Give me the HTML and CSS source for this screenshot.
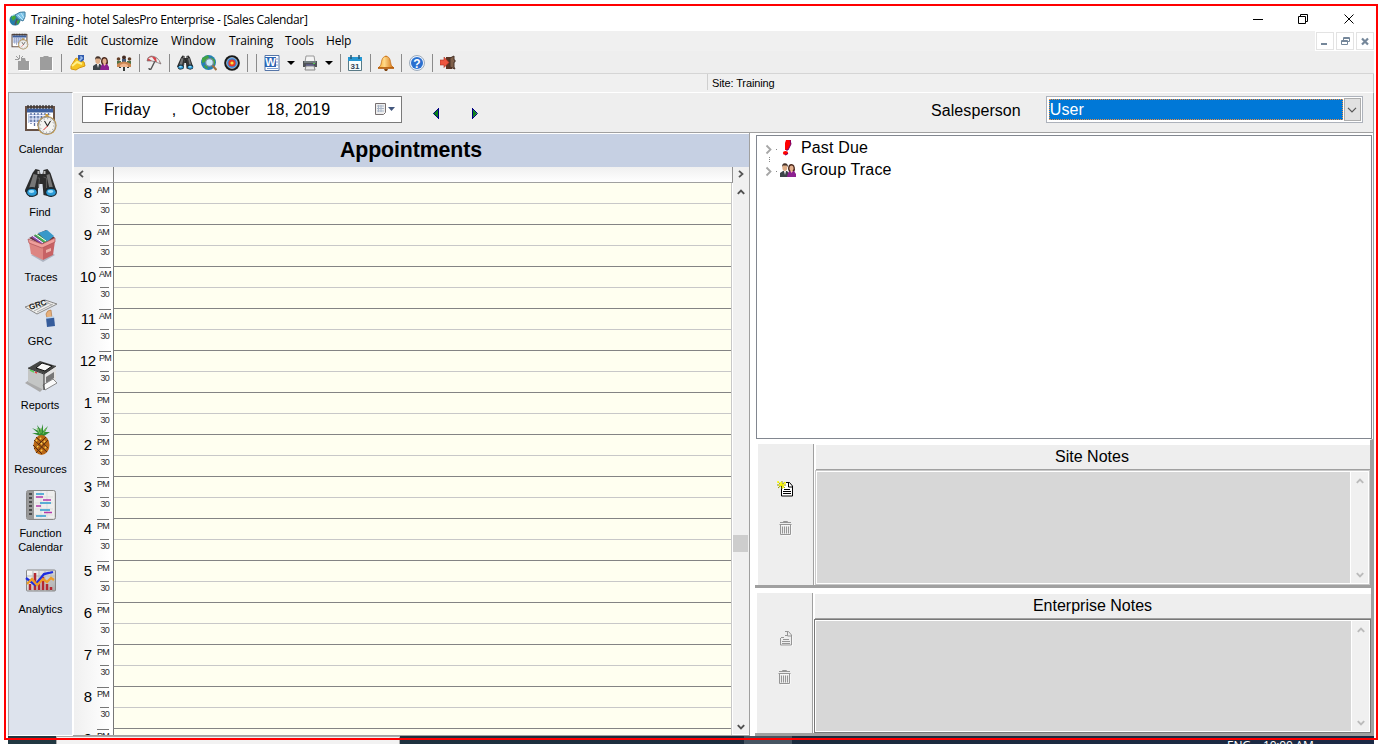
FILE: index.html
```html
<!DOCTYPE html>
<html lang="en">
<head>
<meta charset="utf-8">
<title>Training - hotel SalesPro Enterprise</title>
<link rel="stylesheet" href="styles.css">
</head>
<body>
<svg width="0" height="0" class="defs">
  <defs>
    <linearGradient id="metal" x1="0" y1="0" x2="1" y2="1"><stop offset="0" stop-color="#fff"/><stop offset="1" stop-color="#a8a8a8"/></linearGradient>
    <linearGradient id="gold" x1="0" y1="0" x2="1" y2="0"><stop offset="0" stop-color="#f7a928"/><stop offset=".4" stop-color="#ffd98a"/><stop offset="1" stop-color="#d06a08"/></linearGradient>
    <symbol id="people" viewBox="0 0 16 16">
      <path d="M0 15v-4l3-2h4l2 2v4z" fill="#3c4449"/><path d="M4 9l1 4 1-4z" fill="#fff"/>
      <path d="M8 7Q8 2 11.500 2T15 8L14 10H9z" fill="#4a281c"/>
      <path d="M7 15l1-4 2-2h4l2 3v3z" fill="#8c2190"/><path d="M10.500 9l1 2 1.500-2z" fill="#f2c5a0"/>
      <ellipse cx="4.800" cy="5.500" rx="2.500" ry="3.400" fill="#dfae88"/><path d="M2 5Q2 1 5 1.200T8 5L6.500 3.500H3z" fill="#43322b"/>
      <ellipse cx="11.500" cy="6.200" rx="2" ry="2.800" fill="#e5b18e"/>
    </symbol>
    <symbol id="binoc" viewBox="0 0 32 32">
      <path d="M7 5l3-4 4 1 1 4 2 0 1-4 4-1 3 4 6 18-5 6-8-2-1-11h-4l-1 11-8 2-5-6z" fill="#2c2c2c"/>
      <path d="M8 6l4 1-3 14-6 1zM24 6l-3 1 3 14 4 1z" fill="#777"/><path d="M12 10l2 0-1 10M18 9l3 1 0 10" stroke="#555" fill="none"/>
      <path d="M12 3h2v3h-2zM18 3h2v3h-2z" fill="#bbb"/>
      <ellipse cx="6.500" cy="24" rx="6" ry="5" fill="#1c2b34"/><ellipse cx="25.500" cy="24" rx="6" ry="5" fill="#1c2b34"/>
      <ellipse cx="6.500" cy="24.300" rx="4.700" ry="3.400" fill="#2c9cd8"/><ellipse cx="25.500" cy="24.300" rx="4.700" ry="3.400" fill="#2c9cd8"/>
      <ellipse cx="6" cy="23.500" rx="2.800" ry="1.400" fill="#a5e0fa"/><ellipse cx="25" cy="23.500" rx="2.800" ry="1.400" fill="#a5e0fa"/>
    </symbol>
    <symbol id="calclock" viewBox="0 0 32 32">
      <path d="M0 2h30v24l-3 1H0z" fill="#675247"/><path d="M2 4h26v21H2z" fill="#fff"/><path d="M2 4.500h26v4H2z" fill="#3c5e9e"/>
      <path d="M3 10h23l-9 9H3z" fill="#b9c9e6"/><path d="M6 9v11M9.500 9v13M13 9v13M16.500 9v8M20 9v4M23.500 9v3" stroke="#5b6da0" stroke-width="1.300"/>
      <path d="M4 11.500h21M4 15h11M4 18.500h9" stroke="#eef" />
      <path d="M3 1v4M6 1v4M9 1v4M12 1v4M15 1v4M18 1v4M21 1v4M24 1v4M27 1v4" stroke="#333" stroke-width="1.300"/>
      <path d="M20 10l3 0 1 3h-3z" fill="#c79b40"/><circle cx="22" cy="21.500" r="9.600" fill="#c49439"/><circle cx="22" cy="21.500" r="8.400" fill="#f3f3f0" stroke="#999"/>
      <circle cx="22" cy="21.500" r="6.800" fill="none" stroke="#888" stroke-dasharray="1 2.560"/><path d="M19.500 17l3 5 3-5" fill="none" stroke="#222" stroke-width="1.100"/><path d="M22.500 22l-4 4" stroke="#d33"/>
    </symbol>
    <symbol id="bin" viewBox="0 0 13 15">
      <path d="M2 4h10v10H3" fill="none" stroke="#fff"/><path d="M4.500 1.500V.5h4v1M1 1.500h11M.5 3.500h12M1.500 4v9.500h10V4M3.500 5.500v7M5.500 5.500v7M7.500 5.500v7M9.500 5.500v7" fill="none" stroke="#969696"/>
    </symbol>
    <symbol id="up" viewBox="0 0 8 6"><path d="M.8 4.800L4 1.500l3.200 3.300" fill="none" stroke="currentColor" stroke-width="1.900"/></symbol>
  </defs>
</svg>

<div class="window">
  <header class="titlebar">
    <svg class="app-icon" width="18" height="16" viewBox="0 0 18 16"><circle cx="6" cy="9" r="5.500" fill="#267dab"/><path d="M2 6l4-2 1 3-3 3zM7 10l4-1-2 5z" fill="#43aa39"/><path d="M3 5q2-2 4-1" stroke="#bee" fill="none"/><path d="M6 4q5-4 10-3 1 5-2 9-5-1-8-6z" fill="#7cc3e7" stroke="#427c9d"/><path d="M8 8l-2 6" stroke="#555" stroke-width="1.500"/><path d="M9 4l5 5M12 2l3 5" stroke="#d2f0ff" stroke-width=".8"/></svg>
    <span class="title">Training - hotel SalesPro Enterprise - [Sales Calendar]</span>
    <svg class="caption" width="104" height="12" viewBox="0 0 104 12" fill="none" stroke="#000"><path d="M0 6.500h10"/><path d="M45.500 3.500h7v7h-7zM47.500 3.500v-2h7v7h-2M91.500 1.500l9 9M100.500 1.500l-9 9"/></svg>
  </header>

  <nav class="menubar">
    <svg class="doc-icon" width="18" height="17"><use href="#calclock" width="18" height="17"/></svg>
    <span class="m-file">File</span><span class="m-edit">Edit</span><span class="m-cust">Customize</span><span class="m-win">Window</span><span class="m-train">Training</span><span class="m-tools">Tools</span><span class="m-help">Help</span>
    <div class="mdi">
      <i><svg width="16" height="16"><path d="M4 11h6" stroke="#75879a" stroke-width="2"/></svg></i>
      <i><svg width="16" height="16" fill="none" stroke="#75879a"><path d="M4.500 7.500h6v4h-6zM4.500 8.500h6M6.500 7V4.500h6v4H11M6.500 5.500h6"/></svg></i>
      <i><svg width="16" height="16"><path d="M5 5.500l6 6M11 5.500l-6 6" stroke="#75879a" stroke-width="2.200"/></svg></i>
    </div>
  </nav>

  <div class="toolbar">
    <b><svg width="16" height="16"><path d="M6 4h5l1 3h3v9H4V7h2z" fill="#fff"/><path d="M6 3h4l1 3h3v9H3V6h3z" fill="#9d9d9d"/><path d="M1 1l3 3M4.500 0v4M0 4.500h4M8 1L6 3" stroke="#9d9d9d"/></svg></b>
    <b><svg width="16" height="16"><path d="M3 3h12v13H3z" fill="#fff"/><path d="M2 2h3l1-1h4l1 1h3v13H2z" fill="#9d9d9d"/></svg></b>
    <s class="w9"></s>
    <b><svg width="16" height="16"><path d="M1 11l5-8 8 4 1 4-6 2-3 2-5-1z" fill="#f6c522" stroke="#d39512"/><path d="M2 11l5-4 5 2" stroke="#fff08a" stroke-width="2" fill="none"/><path d="M8 0h6v5l-3 2-3-2z" fill="#345dae"/><path d="M10 2h2v2h-2v2" fill="none" stroke="#bddcff"/></svg></b>
    <b><svg width="16" height="16"><use href="#people" width="16" height="16"/></svg></b>
    <b><svg width="16" height="16"><circle cx="2.500" cy="4" r="1.800" fill="#654028"/><circle cx="8" cy="2.500" r="2" fill="#432b22"/><circle cx="13.500" cy="4" r="1.800" fill="#654028"/><path d="M1 6h4v4H1zM11 6h4v4h-4z" fill="#4c7045"/><path d="M6 4h4v5H6z" fill="#435a79"/><path d="M1 9q7-5 14 0v3H1z" fill="#c98551"/><path d="M4 10q4-3 8 0v2H4z" fill="#efb38a"/><path d="M3 12h2v1H3zM7 12h2v4H7zM11 12h2v1h-2z" fill="#393d3b"/></svg></b>
    <s class="w7"></s>
    <b><svg width="16" height="16"><path d="M1 6q0-4 4-5 6 0 10 8l-5-2-4-1z" fill="#d9444b"/><path d="M2 3l4 3 3 0-3-4zM10 3l1 5 3 1-1-4z" fill="#eee"/><path d="M9 6l-4 8q-2 1-2-1" fill="none" stroke="#555" stroke-width="1.400"/><path d="M1 6q0-4 4-5 7 0 10 8l-5-2-4-1z" fill="none" stroke="#777" stroke-width=".7"/></svg></b>
    <s class="w9"></s>
    <b><svg width="17" height="16"><use href="#binoc" width="17" height="16"/></svg></b>
    <b><svg width="16" height="16"><circle cx="7.500" cy="7.500" r="7.500" fill="#2580b5"/><path d="M1 3l6-3 1 3-4 4-3 1zM10 2l4 3v5l-3-2zM3 10l3 1 1 3-3-1z" fill="#41a344"/><circle cx="8.500" cy="7.500" r="3.800" fill="#cceaf7" stroke="#78899a" stroke-width="1.200"/><path d="M11.500 10.500l4 4.500" stroke="#9d7040" stroke-width="2.200"/></svg></b>
    <b><svg width="16" height="16"><circle cx="8" cy="8" r="7.800" fill="#181818"/><circle cx="8" cy="8" r="5.400" fill="#3388de" stroke="#ddd" stroke-width=".7"/><circle cx="8" cy="8" r="3.600" fill="#e33a27"/><circle cx="8" cy="8" r="1.600" fill="#ffe140"/></svg></b>
    <s class="w9"></s><s class="w8"></s>
    <b><svg width="16" height="16"><path d="M1 .5h14v15H1z" fill="#fff" stroke="#5676a8"/><path d="M12 4h2M12 7h2M12 10h2M3 13.500h11" stroke="#7ea1d4"/><path d="M1 2h11v10H1z" fill="#2c65b5"/><text x="6.500" y="11" class="svg-word">W</text></svg></b>
    <em></em>
    <b><svg width="16" height="16"><path d="M4 1h8l1 6H3z" fill="#f5f5f5" stroke="#999"/><path d="M1 6h14v6H1z" fill="#505357"/><path d="M2 7h12" stroke="#9aa" stroke-width="1"/><path d="M4 11h8l1 4H3z" fill="#e8e8e8" stroke="#888"/><path d="M4 10h8" stroke="#66a"/><path d="M11 8.500h2" stroke="#5c5"/></svg></b>
    <em></em>
    <s class="w7"></s>
    <b><svg width="16" height="16"><path d="M1.500 2.500h13v13h-13z" fill="#f7ffff" stroke="#597a86"/><path d="M1 2h14v4H1z" fill="#2596d1"/><path d="M4 0v4M12 0v4" stroke="#245977" stroke-width="1.500"/><text x="8" y="13.500" class="svg-31">31</text></svg></b>
    <s class="w8"></s>
    <b><svg width="16" height="16"><circle cx="8" cy="2" r="1.500" fill="#e58c21"/><path d="M8 1.500c5 0 4 6 5.500 9l2.500 2.500H0l2.500-2.500c1.500-3 .5-9 5.500-9z" fill="url(#gold)" stroke="#c16710" stroke-width=".7"/><path d="M0 13h16" stroke="#b35a08" stroke-width="1.500"/><path d="M6 14h4l-1 2H7z" fill="#7e4612"/></svg></b>
    <s class="w8"></s>
    <b><svg width="16" height="16"><circle cx="8" cy="8" r="7.500" fill="#e9f3ff" stroke="#9caabb"/><circle cx="8" cy="8" r="6" fill="#2b70cf"/><text x="8" y="12.500" class="svg-help">?</text></svg></b>
    <s class="w8"></s>
    <b><svg width="16" height="16"><path d="M6 2h6v12H6z" fill="#5c3423"/><path d="M10 3l4-2v4h1v2h-1v5l1 2-5-2z" fill="#80604b" stroke="#49342a"/><path d="M0 5h4V2l5 5.500-5 5V10H0z" fill="#ee553e" stroke="#a72f21" stroke-width=".6"/></svg></b>
  </div>

  <div class="statusrow"><span>Site: Training</span></div>

  <div class="workspace">
    <aside class="sidebar">
      <div class="side-item"><svg width="32" height="32"><use href="#calclock" width="32" height="32"/></svg><span>Calendar</span></div>
      <div class="side-item find"><svg width="33" height="32"><use href="#binoc" width="33" height="32"/></svg><span>Find</span></div>
      <div class="side-item traces"><svg width="32" height="32" viewBox="0 0 32 32"><path d="M5 25l12 7 12-7-3-2z" fill="#aeb5c2"/><path d="M3 8l17-8 9 8-13 7z" fill="#6a3637"/><path d="M12 3l9-3 7 6-7 6z" fill="#3999c9"/><path d="M8 5l4-1 9 7-3 2z" fill="#41b458"/><path d="M5 7l4-1 9 7-3 1z" fill="#8846b4"/><path d="M7 6l10 7M10 4l10 7" stroke="#fff"/><path d="M3 12l14 4v14L5 24z" fill="#dd8582"/><path d="M17 16l12-5-2 14-10 5z" fill="#c76265"/><path d="M2 9l14 5 13-6v4l-13 6-13-5z" fill="#ef9f9b" stroke="#ad5156" stroke-width=".7"/><path d="M20 20l5-2v3l-5 2z" fill="#ecb0a9"/></svg><span>Traces</span></div>
      <div class="side-item grc"><svg width="32" height="32" viewBox="0 0 32 32"><path d="M0 10L20 3l12 4-20 10z" fill="#f0f0ee" stroke="#888"/><path d="M12 15l16-8M9 14l15-8M19 4l8 4" stroke="#aaa"/><text x="5" y="13" transform="rotate(-18 5 13)" class="svg-grc">GRC</text><path d="M21 17q1-4 5-4l1 8h-5z" fill="#e6b07c" stroke="#b57c4b" stroke-width=".7"/><path d="M21 21l8-1 1 9-8 1z" fill="#365c9b"/><path d="M21 21l8-1" stroke="#bdd6f1" stroke-width="1.500"/></svg><span>GRC</span></div>
      <div class="side-item reports"><svg width="32" height="32" viewBox="0 0 32 32"><path d="M0 23l4-3 14 9-3 3z" fill="#aaa"/><path d="M3 8L15 1l16 5-11 8z" fill="#454745"/><path d="M11 8l6-5 10 3-7 5z" fill="#f7f7f7" stroke="#111"/><path d="M3 8l16 6v16L3 22z" fill="#c4c6c5"/><path d="M19 14L31 6v15l-12 9z" fill="#e2e2e2"/><path d="M21 17l8-5v6l-8 6z" fill="#777"/><path d="M18 25l10-6 4 4-12 7z" fill="#fafafa" stroke="#888"/><path d="M5 10l4 2" stroke="#57d157" stroke-width="1.500"/><path d="M10 12l2 1" stroke="#d44" stroke-width="1.500"/><path d="M3 8l16 6 12-8M19 14v16" fill="none" stroke="#333"/></svg><span>Reports</span></div>
      <div class="side-item resources"><svg width="32" height="32" viewBox="0 0 32 32"><path d="M15 12L7 9l6 0-6-5 7 3-2-6 4 5 2-6v7l5-5-3 6h5l-6 4-3 2z" fill="#318c36"/><path d="M15 10l-3-6M18 10l3-6M16 9V4" stroke="#78c555"/><ellipse cx="16.500" cy="21" rx="8" ry="10" fill="#ba6714"/><path d="M9 16l13 12M11 13l12 11M8 21l9 9M23 16L11 29M21 13L9 25" stroke="#532c12"/><path d="M11 16l1 1M15 14l1 1M19 17l1 1M12 22l1 1M16 19l1 1M16 26l1 1M20 23l1 1" stroke="#ffd052" stroke-width="2"/></svg><span>Resources</span></div>
      <div class="side-item double"><svg width="32" height="32" viewBox="0 0 32 32"><rect x="1.500" y="1.500" width="29" height="29" rx="2" fill="#ddd" stroke="#888"/><path d="M2 2h7v28H2z" fill="#999"/><path d="M4 5h3M4 9h3M4 13h3M4 17h3M4 21h3M4 25h3" stroke="#333" stroke-width="1.300"/><path d="M9 2h20v27H9z" fill="#eee"/><path d="M10 8h18M10 14h18M10 20h18M10 26h18M16 2v27M22 2v27" stroke="#ddd"/><path d="M11 5h8M15 14h11M11 27h10M15 21h10" stroke="#2e9ad0" stroke-width="1.700"/><path d="M11 8h7M18 11h8M11 17h5M19 23.500h8" stroke="#b23aac" stroke-width="1.400"/></svg><span>Function<br>Calendar</span></div>
      <div class="side-item analytics"><svg width="32" height="24" viewBox="0 0 32 24"><rect x="1.500" y="1" width="29" height="21" rx="1" fill="url(#metal)" stroke="#888"/><path d="M2 7h28M2 13h28M8 2v20M14 2v20M20 2v20M26 2v20" stroke="#bbb"/><path d="M5 21v-6M10 21V4M14 21v-9M18 21V8M22 21v-6M26 21v-3" stroke="#b42831" stroke-width="2.500"/><path d="M1 9l9 7 5-6 4-5 5-1 4-1" fill="none" stroke="#1e2ee0" stroke-width="2.300"/><path d="M2 15l5-5 5 6 6-6 4 3 4-4 3 2" fill="none" stroke="#ee9c27" stroke-width="2.200"/></svg><span>Analytics</span></div>
    </aside>

    <main class="main">
      <div class="datebar">
        <div class="datefield"><span class="d-day">Friday</span><span class="d-comma">,</span><span class="d-month">October</span><span class="d-num">18, 2019</span>
          <svg width="22" height="14"><path d="M1.500 1.500h10v9l-2 2h-8z" fill="#eee" stroke="#766f70"/><path d="M3 4h7M3 6.500h7M3 9h7M4.500 3v7M7 3v7" stroke="#a9b6c8"/><path d="M14 5h7l-3.500 4z" fill="#43577d"/></svg></div>
        <svg class="prevnext" width="46" height="13"><path d="M6.500 1.500v10L1 6.500z" fill="#078017"/><path d="M6.500 1v11M1.500 6.500l5-5M1.500 6.500l5 5" stroke="#000080" fill="none"/><path d="M40 1.500v10l5-5z" fill="#078017"/><path d="M40.500 1v11M45.500 6.500l-5-5M45.500 6.500l-5 5" stroke="#000080" fill="none"/></svg>
        <label>Salesperson</label>
        <div class="combo"><div class="picked">User</div><div class="drop"><svg width="10" height="6"><path d="M1 .8l4 4 4-4" fill="none" stroke="#555" stroke-width="1.200"/></svg></div></div>
      </div>

      <div class="columns">
        <section class="appointments">
          <h1>Appointments</h1>
          <div class="dayhead"><div class="navbtn"><svg width="6" height="8"><path d="M5 .8L1.500 4 5 7.200" fill="none" stroke="#555" stroke-width="1.800"/></svg></div><div class="corner"></div><div class="daycol"></div><div class="navbtn right"><svg width="6" height="8"><path d="M1 .8L4.500 4 1 7.200" fill="none" stroke="#555" stroke-width="1.800"/></svg></div></div>
          <div class="daybody">
            <div class="hours">
              <div class="hour"><span>8</span><sup>AM</sup><sub>30</sub><p></p></div>
              <div class="hour"><span>9</span><sup>AM</sup><sub>30</sub><p></p></div>
              <div class="hour wide"><span>10</span><sup>AM</sup><sub>30</sub><p></p></div>
              <div class="hour wide"><span>11</span><sup>AM</sup><sub>30</sub><p></p></div>
              <div class="hour wide"><span>12</span><sup>PM</sup><sub>30</sub><p></p></div>
              <div class="hour"><span>1</span><sup>PM</sup><sub>30</sub><p></p></div>
              <div class="hour"><span>2</span><sup>PM</sup><sub>30</sub><p></p></div>
              <div class="hour"><span>3</span><sup>PM</sup><sub>30</sub><p></p></div>
              <div class="hour"><span>4</span><sup>PM</sup><sub>30</sub><p></p></div>
              <div class="hour"><span>5</span><sup>PM</sup><sub>30</sub><p></p></div>
              <div class="hour"><span>6</span><sup>PM</sup><sub>30</sub><p></p></div>
              <div class="hour"><span>7</span><sup>PM</sup><sub>30</sub><p></p></div>
              <div class="hour"><span>8</span><sup>PM</sup><sub>30</sub><p></p></div>
              <div class="hour"><span>9</span><sup>PM</sup><p></p></div>
            </div>
            <div class="scroll"><svg width="8" height="6"><use href="#up" width="8" height="6"/></svg><div class="thumb"></div><svg class="down" width="8" height="6"><use href="#up" width="8" height="6"/></svg></div>
          </div>
        </section>

        <section class="rightpane">
          <div class="tree">
            <div class="node"><svg class="chev" width="16" height="22" fill="none"><path d="M4.500 8.500l4 4-4 4" stroke="#a6a6a6" stroke-width="1.800"/><path d="M14 12.500h2M7.500 20v2" stroke="#888" stroke-dasharray="1 1"/></svg><svg width="17" height="17"><path d="M7 0h5v4l-3 6H6V3z" fill="#f00"/><path d="M11 0l1 4-3 6H7" fill="none" stroke="#700070"/><ellipse cx="6.500" cy="13" rx="2.600" ry="2" fill="#f00"/><path d="M9 13q-1 2-3 2" stroke="#700070" fill="none"/></svg><span>Past Due</span></div>
            <div class="node"><svg class="chev" width="16" height="22" fill="none"><path d="M4.500 8.500l4 4-4 4" stroke="#a6a6a6" stroke-width="1.800"/><path d="M14 12.500h2M7.500 0v4" stroke="#888" stroke-dasharray="1 1"/></svg><svg width="17" height="17"><use href="#people" x="1" width="16" height="16"/></svg><span>Group Trace</span></div>
          </div>
          <div class="notes site">
            <div class="note-tools">
              <svg class="new" width="16" height="16"><path d="M4.500 5v10h11V5l-3-3.500H9" fill="#fff" stroke="#000"/><path d="M11.500 2v4h4M7 8.500h6M6 10.500h8M6 12.500h8" stroke="#000" fill="none"/><path d="M1 1l7 6M1 7l7-6M5 0v8M0 4h9" stroke="#9a9a00" stroke-width="1"/><path d="M0 1h2M4 1v3M7 2h2M2 4h5M5 6h2" stroke="#ff0" stroke-width="1.500"/></svg>
              <svg width="13" height="15"><use href="#bin" width="13" height="15"/></svg>
            </div>
            <div class="note-main"><h2>Site Notes</h2><div class="note-box"><div class="paper"></div><div class="note-scroll"><svg width="8" height="6"><use href="#up" width="8" height="6"/></svg><svg class="down" width="8" height="6"><use href="#up" width="8" height="6"/></svg></div></div></div>
          </div>
          <div class="notes enterprise">
            <div class="note-tools">
              <svg class="new" width="16" height="16" fill="none"><path d="M5 16h11V6" stroke="#fff"/><path d="M3.500 8v7h11V5l-3-3.500H8M10.500 2v4h4M6 9.500h6M5 11.500h8M5 13.500h8M4 7.500h3M8 5.500h3" stroke="#969696"/></svg>
              <svg width="13" height="15"><use href="#bin" width="13" height="15"/></svg>
            </div>
            <div class="note-main"><h2>Enterprise Notes</h2><div class="note-box"><div class="paper"></div><div class="note-scroll"><svg width="8" height="6"><use href="#up" width="8" height="6"/></svg><svg class="down" width="8" height="6"><use href="#up" width="8" height="6"/></svg></div></div></div>
          </div>
        </section>
      </div>
    </main>
  </div>
</div>
<footer class="taskbar"><div class="search"></div><div class="active-task"></div><span class="lang">ENG</span><span class="time">10:00 AM</span></footer>
<div class="frame"></div>
</body>
</html>
```

FILE: styles.css
```css
* { box-sizing: border-box; }
body { margin: 0; width: 1382px; height: 744px; overflow: hidden; background: #fff; color: #000; font-family: "Liberation Sans", Arial, sans-serif; font-size: 16px; }
svg { display: block; flex: none; }
.defs { position: absolute; }
.frame { position: absolute; left: 4px; top: 4px; width: 1374px; height: 736px; border: 2px solid #f00; }
.window { display: flex; flex-direction: column; width: 1366px; height: 736px; margin-left: 8px; padding-top: 6px; }

.titlebar { display: flex; align-items: center; height: 25px; padding-left: 1px; font: 12px "Open Sans", sans-serif; }
.title { width: 290px; margin-left: 4px; padding-top: 2px; white-space: nowrap; letter-spacing: -.36px; }
.caption { margin-left: auto; margin-right: 17px; }

.menubar { display: flex; align-items: center; height: 20px; background: #f0f0f0; font: 12px/18px "Open Sans", sans-serif; letter-spacing: -.18px; white-space: nowrap; }
.doc-icon { margin: 0 6px 0 3px; }
.m-file { width: 32px; }
.m-edit { width: 34px; }
.m-cust { width: 70px; }
.m-win { width: 58px; }
.m-train { width: 56px; }
.m-tools { width: 41px; }
.mdi { display: flex; gap: 1px; margin-left: auto; background: #fff; padding: 1px 0 0 0; height: 20px; }
.mdi i { width: 18px; height: 18px; margin-left: 1px; border: 1px solid #e3e3e3; background: #fff; }

.toolbar { display: flex; align-items: center; height: 23px; padding: 1px 0 0 3px; background: #eee; border-bottom: 1px solid #d5d5d5; }
.toolbar b { display: flex; justify-content: center; width: 23px; }
.toolbar s { height: 18px; background: linear-gradient(#8b8b8b, #8b8b8b) 4px 0 / 1px 100% no-repeat; }
.toolbar em { width: 15px; height: 4px; margin-top: 1px; background: #000; clip-path: polygon(4px 0, 12px 0, 8px 4px); }
.w7 { width: 7px; }
.w8 { width: 8px; }
.w9 { width: 9px; }
.svg-word { font: bold 11px "Liberation Sans", sans-serif; fill: #fff; text-anchor: middle; }
.svg-31 { font: bold 8px "Liberation Sans", sans-serif; fill: #345; text-anchor: middle; }
.svg-help { font: bold 12px "Liberation Sans", sans-serif; fill: #fff; text-anchor: middle; }
.svg-grc { font: bold 8px "Liberation Sans", sans-serif; fill: #222; }

.statusrow { height: 18px; padding-left: 699px; background: #f0f0f0; border-right: 1px solid #c8c8c8; }
.statusrow span { display: block; height: 16px; padding-left: 4px; border-left: 1px solid #cfcfcf; font-size: 11px; line-height: 19px; letter-spacing: -.12px; }

.workspace { display: flex; height: 644px; }
.sidebar { width: 65px; padding-top: 5px; background: #dde3ed; border: 1px solid #a0a0a0; border-bottom-color: #fff; border-right-color: #fff; }
.side-item { display: flex; flex-direction: column; align-items: center; height: 64px; padding: 6px 0 0 1px; font-size: 11px; line-height: 14px; text-align: center; white-space: nowrap; }
.side-item span { margin-top: 6px; }
.side-item.find span { margin: 5px 2px 0 0; }
.side-item.traces { padding-top: 4px; }
.side-item.traces svg { margin-left: 2px; }
.side-item.traces span { margin-top: 8px; }
.side-item.grc { padding-top: 7px; }
.side-item.grc span { margin: 5px 2px 0 0; }
.side-item.reports span { margin-right: 2px; }
.side-item.resources span, .side-item.double span, .side-item.analytics span { margin-right: 1px; }
.side-item.double { height: 76px; padding-top: 7px; }
.side-item.double span { margin-top: 5px; }
.side-item.analytics { padding-top: 11px; }
.side-item.analytics span { margin-top: 9px; }

.main { width: 1301px; background: #eee; }
.datebar { display: flex; align-items: flex-start; height: 41px; padding: 4px 10px 0 9px; background: #eee; border-top: 1px solid #fff; border-bottom: 1px solid #a0a0a0; border-right: 1px solid #a0a0a0; }
.datefield { display: flex; width: 320px; height: 27px; margin-top: -1px; padding: 0 5px 0 21px; background: #fff; border: 1px solid #7a7a7a; line-height: 25px; white-space: nowrap; }
.d-day { width: 68px; letter-spacing: .35px; }
.d-comma { width: 20px; }
.d-month { width: 75px; letter-spacing: .2px; }
.d-num { width: 108px; letter-spacing: .2px; }
.datefield svg { margin-top: 5px; }
.prevnext { margin: 10px 0 0 30px; }
.datebar label { margin: 5px 25px 0 453px; letter-spacing: .08px; }
.combo { display: flex; width: 317px; height: 27px; margin-top: -1px; padding: 2px 1px 2px 2px; background: #fff; border: 1px solid #adb2bb; }
.picked { width: 295px; height: 21px; background: #0078d7; border: 1px dotted #f09040; color: #fff; line-height: 19px; padding-left: 0; letter-spacing: .1px; }
.drop { display: flex; align-items: center; justify-content: center; width: 17px; height: 23px; margin: -1px 0 0 1px; border: 1px solid #adadad; background: #e1e1e1; }

.columns { display: flex; height: 603px; background: #fff; }
.appointments { width: 677px; padding: 1px 0 0 1px; border-right: 1px solid #a0a0a0; border-bottom: 1px solid #a0a0a0; }
.appointments h1 { height: 33px; margin: 0; background: #c6d0e3; text-align: center; padding-right: 1px; font-size: 21.300px; line-height: 32px; letter-spacing: -.1px; }
.dayhead { display: flex; height: 16px; background: #f4f4f4; }
.navbtn { width: 16px; padding: 3px 0 0 4px; background: #f0f0f0; }
.corner { width: 24px; border-right: 1px solid #828282; border-bottom: 1px solid #a0a0a0; background: linear-gradient(#f0f0f0, #fff); }
.daycol { width: 619px; border-right: 1px solid #909090; border-bottom: 1px solid #a0a0a0; background: linear-gradient(#f0f0f0, #fff); }
.navbtn.right { padding-left: 5px; }
.daybody { display: flex; height: 552px; }
.hours { width: 658px; overflow: hidden; border-right: 1px solid #c8c8c8; }
.hour { display: grid; grid-template: 21px 21px / 23px 16px 1fr; height: 42px; background: linear-gradient(90deg, #f0f0f0, #fff 36px) 0 0 / 39px 100% no-repeat; }
.hour span { grid-area: 1 / 1; padding: 0 5px 0 0; text-align: right; font-size: 15px; line-height: 20px; letter-spacing: -.2px; }
.hour.wide span { padding-right: 1px; }
.hour sup { grid-area: 1 / 2; justify-self: start; height: 16px; margin: 0; font-size: 9px; line-height: 12px; color: #222; border-top: 1px solid #777; letter-spacing: -.8px; }
.hour.wide sup { margin-left: 2px; }
.hour:first-child sup { border-color: transparent; }
.hour sub { grid-area: 2 / 2; justify-self: end; margin: -1px 4px 0 0; height: 14px; font-size: 9px; line-height: 13px; color: #333; border-top: 1px solid #777; letter-spacing: -.7px; vertical-align: baseline; }
.hour p { grid-area: 1 / 3 / 3 / 4; margin: 0; border-left: 1px solid #777; border-bottom: 1px solid #848484; background: linear-gradient(#c8c8c8, #c8c8c8) 0 20px / 100% 1px no-repeat #fffff0; }
.scroll { display: flex; flex-direction: column; align-items: center; width: 17px; height: 551px; padding-top: 6px; background: #f0f0f0; color: #505050; border-left: 1px solid #fff; }
.thumb { width: 15px; height: 17px; margin: 340px 1px 0 0; background: #cdcdcd; }
.scroll .down { margin-top: 172px; }
.down { transform: rotate(180deg); }

.rightpane { width: 624px; padding: 2px 0 0 6px; border-right: 1px solid #a0a0a0; background: #fff; }
.tree { width: 616px; height: 304px; padding: 1px 0 0 5px; border: 1px solid #828790; background: #fff; }
.node { display: flex; align-items: center; height: 22px; white-space: nowrap; letter-spacing: .15px; }
.node .chev { margin-right: 1px; }
.node svg + svg { margin-right: 5px; }
.node span { margin-top: -1px; }
.notes { display: flex; }
.site { width: 618px; height: 149px; margin-left: -1px; padding: 4px 0 0 3px; border-right: 3px solid #a0a0a0; border-bottom: 3px solid #a0a0a0; border-top: 1px solid #fff; }
.enterprise { width: 618px; height: 148px; margin-left: -1px; padding: 5px 0 0 2px; border-right: 2px solid #a0a0a0; border-bottom: 3px solid #a0a0a0; }
.note-tools { width: 56px; background: #eee; border-right: 1px solid #a0a0a0; padding: 37px 0 0 20px; }
.note-tools .new { margin-bottom: 24px; }
.site .new { margin-left: -1px; }
.note-tools svg + svg { margin-left: 1px; }
.note-main { flex: 1; padding: 1px 0 0 1px; }
.note-main h2 { height: 25px; margin: 0 0 0 1px; background: #eee; border-bottom: 1px solid #a0a0a0; text-align: center; font-size: 16px; font-weight: normal; line-height: 24px; }
.site h2 { padding-right: 2px; }
.enterprise h2 { padding-right: 1px; }
.note-box { display: flex; height: 115px; border: 1px solid #c8c8c8; padding: 1px; }
.enterprise .note-box { height: 114px; border-color: #777; }
.paper { flex: 1; background: #d7d7d7; border-right: 1px solid #fff; }
.note-scroll { display: flex; flex-direction: column; justify-content: space-between; align-items: center; width: 17px; padding: 6px 0 5px; background: #f0f0f0; color: #bbb; }

.taskbar { display: flex; width: 1366px; height: 8px; margin-left: 8px; padding-left: 48px; overflow: hidden; background: linear-gradient(90deg, #213841, #1b2b3d 60%, #1b2945); color: #fff; font: 12px/16px "Open Sans", sans-serif; }
.search { width: 344px; background: #f2f2f2; border: 1px solid #aaa; border-width: 1px 1px 0; }
.active-task { width: 48px; margin-left: 344px; background: #475562; }
.taskbar span { padding-top: 2px; white-space: nowrap; letter-spacing: -.2px; }
.lang { width: 36px; margin-left: 435px; }
```
